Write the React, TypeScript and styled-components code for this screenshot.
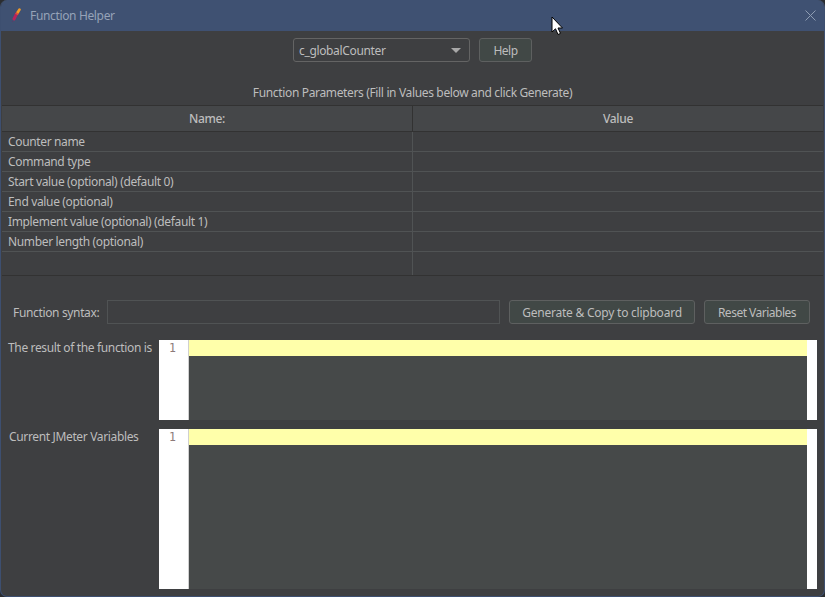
import React from "react";
import styled, { createGlobalStyle } from "styled-components";

const Global = createGlobalStyle`
  html, body { margin: 0; padding: 0; background: #2b2d30; }
  #root { width: 825px; height: 597px; overflow: hidden; }
`;

const Win = styled.div`
  position: relative;
  box-sizing: border-box;
  width: 825px;
  height: 597px;
  display: flex;
  flex-direction: column;
  background: #3e3f41;
  border: 1px solid #3d4f70;
  border-top: 0;
  border-radius: 7px;
  overflow: hidden;
  font-family: "Noto Sans", sans-serif;
  font-size: 12px;
  letter-spacing: -0.35px;
  color: #bdbdbd;
`;

const TitleBar = styled.div`
  flex: none;
  height: 31px;
  margin: 0 -1px;
  padding: 0 9px 0 11px;
  display: flex;
  align-items: center;
  gap: 7px;
  background: #3f5172;
`;

const TitleText = styled.span`
  flex: 1;
  color: #96a3b8;
`;

const TopRow = styled.div`
  flex: none;
  height: 38px;
  padding-top: 7px;
  box-sizing: border-box;
  display: flex;
  justify-content: center;
  gap: 9px;
`;

const Combo = styled.div`
  box-sizing: border-box;
  width: 177px;
  height: 24px;
  padding: 0 8px 0 5px;
  display: flex;
  align-items: center;
  justify-content: space-between;
  border: 1px solid #646464;
  border-radius: 3px;
  background: #3e3f41;
`;

const Arrow = styled.span`
  width: 0;
  height: 0;
  border-left: 5px solid transparent;
  border-right: 5px solid transparent;
  border-top: 5px solid #a8a8a8;
`;

const Btn = styled.div<{ $w: number; $ls?: number }>`
  box-sizing: border-box;
  width: ${(p) => p.$w}px;
  height: 24px;
  display: flex;
  align-items: center;
  justify-content: center;
  border: 1px solid #5e6060;
  border-radius: 3px;
  background: #414846;
  letter-spacing: ${(p) => p.$ls ?? -0.35}px;
`;

const Caption = styled.div`
  flex: none;
  height: 36px;
  padding-top: 13px;
  box-sizing: border-box;
  text-align: center;
  line-height: 22px;
`;

const Table = styled.div`
  flex: none;
  box-sizing: border-box;
  height: 171px;
  margin: 0 1px;
  display: flex;
  flex-direction: column;
  border-top: 1px solid #323232;
  border-bottom: 1px solid #323232;
`;

const HeadRow = styled.div`
  flex: none;
  height: 26px;
  box-sizing: border-box;
  display: grid;
  grid-template-columns: 411px 1fr;
  background: #454749;
  border-bottom: 1px solid #323232;
  font-weight: 500;
`;

const HeadCell = styled.div`
  display: flex;
  align-items: center;
  justify-content: center;
  border-right: 1px solid #323232;
  &:last-child { border-right: 0; }
`;

const Row = styled.div<{ $grow?: boolean }>`
  box-sizing: border-box;
  flex: ${(p) => (p.$grow ? "1" : "none")};
  height: ${(p) => (p.$grow ? "auto" : "20px")};
  display: grid;
  grid-template-columns: 411px 1fr;
  border-bottom: 1px solid #505354;
  &:last-child { border-bottom: 0; }
`;

const Cell = styled.div`
  padding-left: 6px;
  line-height: 19px;
  border-right: 1px solid #505354;
  &:last-child { border-right: 0; }
`;

const SyntaxRow = styled.div`
  flex: none;
  margin-top: 24px;
  height: 24px;
  padding: 0 13px 0 12px;
  display: flex;
  align-items: center;
`;

const SyntaxLabel = styled.span`
  flex: 0 0 94px;
`;

const SyntaxInput = styled.div`
  box-sizing: border-box;
  width: 393px;
  height: 24px;
  margin-right: 9px;
  border: 1px solid #505354;
  background: #3e3f41;
`;

const BtnGap = styled.div`
  display: flex;
  gap: 9px;
`;

const EditorRow = styled.div<{ $h: number; $mt: number }>`
  flex: none;
  height: ${(p) => p.$h}px;
  margin-top: ${(p) => p.$mt}px;
  padding-right: 7px;
  display: flex;
`;

const EditorLabel = styled.div<{ $pl: number }>`
  box-sizing: border-box;
  width: 158px;
  padding-left: ${(p) => p.$pl}px;
  line-height: 15px;
`;

const Gutter = styled.div`
  box-sizing: border-box;
  width: 30px;
  background: #ffffff;
  border-right: 1px solid #d0d0d0;
  color: #8d7a78;
  font-family: "DejaVu Sans Mono", monospace;
  font-size: 11.5px;
  letter-spacing: 0;
  line-height: 16px;
  padding-left: 10px;
`;

const EditorArea = styled.div`
  flex: 1;
  background: #464949;
`;

const ActiveLine = styled.div`
  height: 16px;
  background: #ffffaa;
`;

const RightStrip = styled.div`
  width: 10px;
  background: #ffffff;
`;

const Cursor = styled.svg`
  position: absolute;
  left: 550px;
  top: 16px;
`;

const params = [
  "Counter name",
  "Command type",
  "Start value (optional) (default 0)",
  "End value (optional)",
  "Implement value (optional) (default 1)",
  "Number length (optional)",
];

function Editor({ label, h, mt, pl }: { label: string; h: number; mt: number; pl: number }) {
  return (
    <EditorRow $h={h} $mt={mt}>
      <EditorLabel $pl={pl}>{label}</EditorLabel>
      <Gutter>1</Gutter>
      <EditorArea>
        <ActiveLine />
      </EditorArea>
      <RightStrip />
    </EditorRow>
  );
}

export default function App() {
  return (
    <>
      <Global />
      <Win>
        <TitleBar>
          <svg width="12" height="16" viewBox="0 0 12 16">
            <path d="M1 14 L2 13" stroke="#5a3a6a" strokeWidth="1" />
            <path d="M3 11 L5.5 6" stroke="#b8245c" strokeWidth="3" strokeLinecap="round" />
            <path d="M5.5 6.5 L7 4" stroke="#e0503a" strokeWidth="3" />
            <path d="M7 4 L8.5 1.5" stroke="#f09a28" strokeWidth="2.6" strokeLinecap="round" />
          </svg>
          <TitleText>Function Helper</TitleText>
          <svg width="11" height="11" viewBox="0 0 11 11">
            <path d="M0.5 0.5 L10.5 10.5 M10.5 0.5 L0.5 10.5" stroke="#8f9db3" strokeWidth="1" />
          </svg>
        </TitleBar>
        <TopRow>
          <Combo>
            c_globalCounter
            <Arrow />
          </Combo>
          <Btn $w={53} $ls={-0.5}>Help</Btn>
        </TopRow>
        <Caption>Function Parameters (Fill in Values below and click Generate)</Caption>
        <Table>
          <HeadRow>
            <HeadCell>Name:</HeadCell>
            <HeadCell>Value</HeadCell>
          </HeadRow>
          {params.map((p) => (
            <Row key={p}>
              <Cell>{p}</Cell>
              <Cell />
            </Row>
          ))}
          <Row $grow>
            <Cell />
            <Cell />
          </Row>
        </Table>
        <SyntaxRow>
          <SyntaxLabel>Function syntax:</SyntaxLabel>
          <SyntaxInput />
          <BtnGap>
            <Btn $w={186} $ls={-0.23}>Generate &amp; Copy to clipboard</Btn>
            <Btn $w={106} $ls={-0.5}>Reset Variables</Btn>
          </BtnGap>
        </SyntaxRow>
        <Editor label="The result of the function is" h={80} mt={16} pl={7} />
        <Editor label="Current JMeter Variables" h={160} mt={9} pl={8} />
        <Cursor width="14" height="21" viewBox="0 0 14 21">
          <path d="M1 1 L1 16 L4.5 12.8 L7 18.5 L9.5 17.4 L7 12 L11.5 12 Z" fill="#ffffff" stroke="#000000" strokeWidth="1" />
        </Cursor>
      </Win>
    </>
  );
}
